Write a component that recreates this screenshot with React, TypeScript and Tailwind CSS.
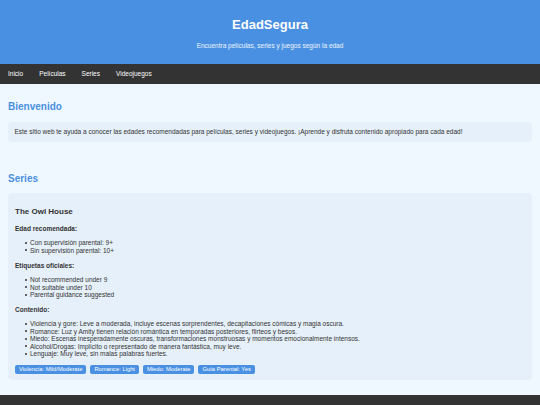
const NAV = ["Inicio", "Películas", "Series", "Videojuegos"];

const SHOW = {
  title: "The Owl House",
  ages: ["Con supervisión parental: 9+", "Sin supervisión parental: 10+"],
  labels: ["Not recommended under 9", "Not suitable under 10", "Parental guidance suggested"],
  content: [
    "Violencia y gore: Leve a moderada, incluye escenas sorprendentes, decapitaciones cómicas y magia oscura.",
    "Romance: Luz y Amity tienen relación romántica en temporadas posteriores, flirteos y besos.",
    "Miedo: Escenas inesperadamente oscuras, transformaciones monstruosas y momentos emocionalmente intensos.",
    "Alcohol/Drogas: Implícito o representado de manera fantástica, muy leve.",
    "Lenguaje: Muy leve, sin malas palabras fuertes.",
  ],
  tags: ["Violencia: Mild/Moderate", "Romance: Light", "Miedo: Moderate", "Guía Parental: Yes"],
};

function Block({ heading, items, last }: { heading: string; items: string[]; last?: boolean }) {
  return (
    <div>
      <h4 className="text-[6.5px] font-bold leading-[7.4px] text-[#333]">{heading}</h4>
      <ul className={`mt-[7px] pl-[9.5px] ${last ? "mb-[7.3px]" : "mb-[7.6px]"}`}>
        {items.map((it) => (
          <li key={it} className="flex items-center gap-[3.5px] text-[6.5px] leading-[7.4px] text-[#333]">
            <span className="h-[2px] w-[2px] shrink-0 rounded-full bg-[#333]" />
            <span>{it}</span>
          </li>
        ))}
      </ul>
    </div>
  );
}

export default function App() {
  return (
    <div className="min-h-[405px] bg-[#f0f8ff] font-['Liberation_Sans',Arial,sans-serif] text-[#333]">
      {/* Header */}
      <header className="flex flex-col items-center bg-[#4a90e2] pb-[15px] pt-[17.6px] text-white">
        <h1 className="text-[13px] font-bold leading-[14.7px]">EdadSegura</h1>
        <p className="mt-[9.7px] text-[6.5px] leading-[7.4px] text-white/90">
          Encuentra películas, series y juegos según la edad
        </p>
      </header>

      {/* Nav */}
      <nav className="flex h-[19.6px] items-center gap-[16px] bg-[#333] px-2">
        {NAV.map((n) => (
          <span key={n} className="text-[6.5px] leading-[7.4px] text-white">
            {n}
          </span>
        ))}
      </nav>

      <main className="px-2 pb-[15px]">
        <section className="pt-[17px]">
          <h2 className="mb-[9.5px] text-[10px] font-bold leading-[11.5px] text-[#4a90e2]">Bienvenido</h2>
          <div className="rounded-[4px] bg-[#e6f0fa] px-[6.4px] py-[6.3px]">
            <p className="text-[6.5px] leading-[7.4px]">
              Este sitio web te ayuda a conocer las edades recomendadas para películas, series y videojuegos. ¡Aprende y disfruta contenido apropiado para cada edad!
            </p>
          </div>
        </section>

        <section className="pt-[31.3px]">
          <h2 className="mb-[8.5px] text-[10px] font-bold leading-[11.5px] text-[#4a90e2]">Series</h2>
          <div className="rounded-[4px] bg-[#e6f0fa] px-[7px] pb-[6px] pt-[14px]">
            <h3 className="mb-[8.4px] text-[8px] font-bold leading-[9.2px]">{SHOW.title}</h3>
            <Block heading="Edad recomendada:" items={SHOW.ages} />
            <Block heading="Etiquetas oficiales:" items={SHOW.labels} />
            <Block heading="Contenido:" items={SHOW.content} last />
            <div className="flex gap-[4px]">
              {SHOW.tags.map((t) => (
                <span
                  key={t}
                  className="flex h-[9.7px] items-center rounded-[2px] bg-[#4a90e2] px-[4px] text-[5.8px] leading-none text-white"
                >
                  {t}
                </span>
              ))}
            </div>
          </div>
        </section>
      </main>

      <footer className="h-[20px] bg-[#333]" />
    </div>
  );
}
